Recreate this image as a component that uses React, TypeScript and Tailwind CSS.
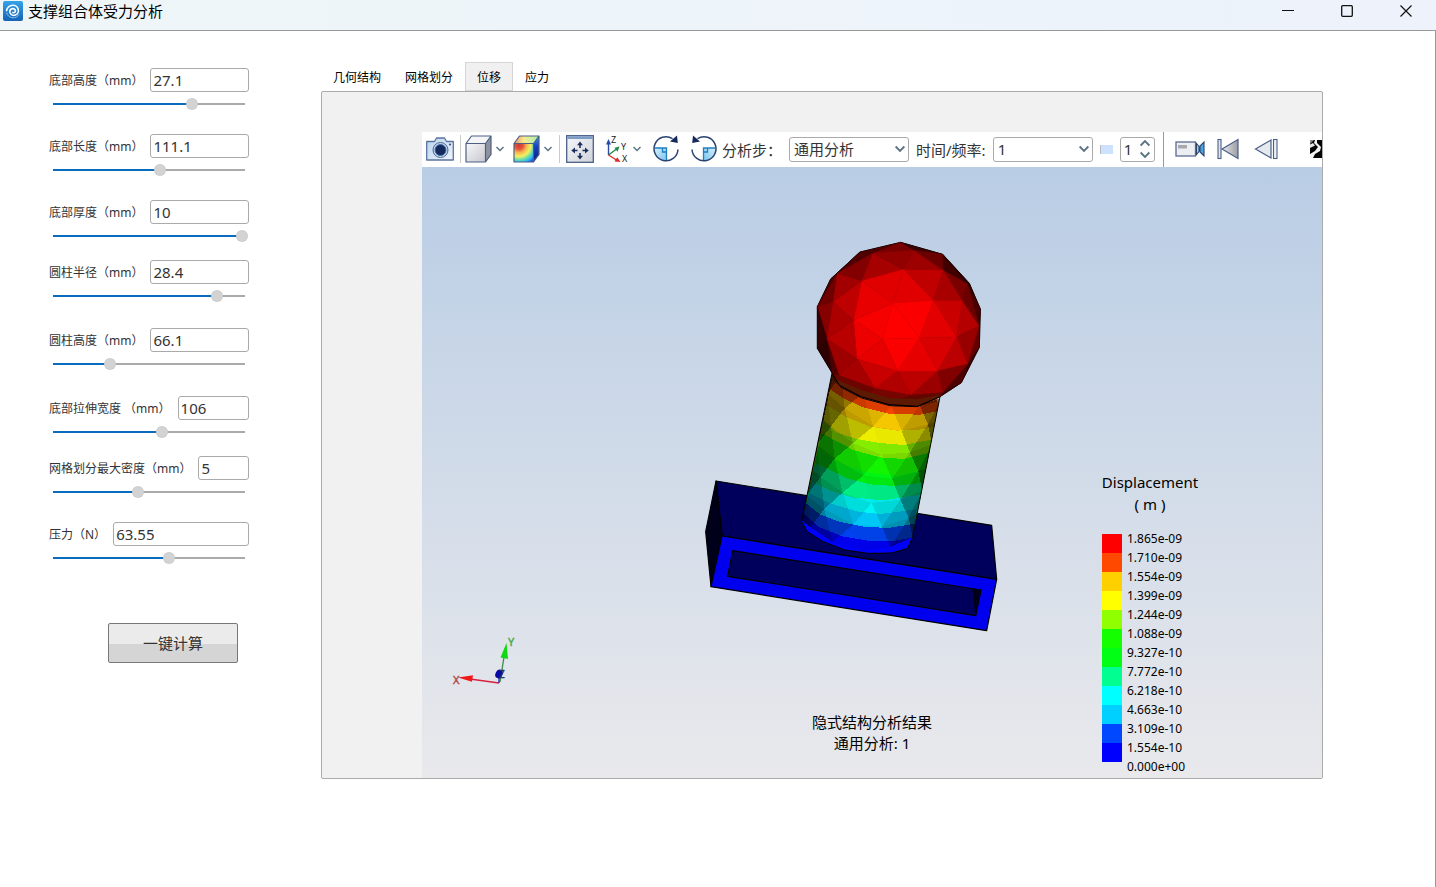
import { useState, type ReactNode } from "react";

type Param = { id: string; label: string; value: number; min: number; max: number; gap: string };

const PARAMS: Param[] = [
  { id: "base-height", label: "底部高度（mm）", value: 27.1, min: 0, max: 37.2, gap: "" },
  { id: "base-length", label: "底部长度（mm）", value: 111.1, min: 0, max: 200, gap: "mt-[22px]" },
  { id: "base-thickness", label: "底部厚度（mm）", value: 10, min: 0, max: 10, gap: "mt-[22px]" },
  { id: "cylinder-radius", label: "圆柱半径（mm）", value: 28.4, min: 0, max: 32.9, gap: "mt-4" },
  { id: "cylinder-height", label: "圆柱高度（mm）", value: 66.1, min: 40, max: 132, gap: "mt-6" },
  { id: "extrude-width", label: "底部拉伸宽度 （mm）", value: 106, min: 0, max: 187.6, gap: "mt-6" },
  { id: "mesh-density", label: "网格划分最大密度（mm）", value: 5, min: 0, max: 11.5, gap: "mt-4" },
  { id: "pressure", label: "压力（N）", value: 63.55, min: 0, max: 105.4, gap: "mt-[22px]" },
];

const TABS = ["几何结构", "网格划分", "位移", "应力"];

function ParamRow({ param }: { param: Param }) {
  const [text, setText] = useState(String(param.value));
  const n = Math.min(param.max, Math.max(param.min, Number(text) || 0));
  const p = (n - param.min) / (param.max - param.min);
  const stop = 5 + 184 * p;
  return (
    <div className={param.gap}>
      <div className="flex h-6 items-center gap-[7px]">
        <label htmlFor={param.id} className="shrink-0 pt-px text-xs whitespace-pre text-[#333]">
          {param.label}
        </label>
        <input
          id={param.id}
          type="text"
          value={text}
          onChange={(e) => setText(e.target.value)}
          className="h-6 min-w-0 flex-1 rounded-[3px] border border-[#aaa] bg-white px-[2px] text-[15px] leading-5 text-[#333] outline-none"
        />
      </div>
      <input
        type="range"
        aria-label={param.label}
        min={param.min}
        max={param.max}
        step="any"
        value={n}
        onChange={(e) => setText(String(Math.round(Number(e.target.value) * 100) / 100))}
        style={{
          backgroundImage: `linear-gradient(to right, #0a6cbf ${stop}px, #aaa ${stop}px, #aaa 192px, transparent 192px)`,
        }}
        className="mt-1 ml-1 block h-4 w-[194px] appearance-none bg-[length:100%_2px] bg-center bg-no-repeat outline-none [&::-webkit-slider-thumb]:h-[10px] [&::-webkit-slider-thumb]:w-[10px] [&::-webkit-slider-thumb]:appearance-none [&::-webkit-slider-thumb]:rounded-full [&::-webkit-slider-thumb]:bg-[#d3d3d3] [&::-webkit-slider-thumb]:shadow-[0_0_0_1px_#ccc]"
      />
    </div>
  );
}

function AppIcon() {
  return (
    <svg viewBox="0 0 20 20" className="h-5 w-5" aria-hidden="true">
      <defs>
        <linearGradient id="app-bg" x1="0" y1="0" x2="0" y2="1">
          <stop offset="0" stopColor="#35a3ea" />
          <stop offset="1" stopColor="#1762b4" />
        </linearGradient>
      </defs>
      <rect width="20" height="20" rx="2" fill="url(#app-bg)" />
      <path
        d="M9.800 11.600c1.300.6 2.700-.4 2.600-1.800-.1-1.600-1.800-2.500-3.400-2-1.700.6-2.500 2.500-1.900 4.200.8 2 3.100 2.900 5.200 2.100 2.400-.9 3.600-3.500 2.900-5.900-.8-2.800-3.700-4.400-6.700-3.700-2.500.6-4.400 2.600-4.900 5"
        fill="none"
        stroke="#fff"
        strokeWidth="1.600"
        strokeLinecap="round"
      />
      <path d="M3.600 11.500c.6 3 3.300 5.300 6.500 5.300 2.500 0 4.700-1.300 5.900-3.300" fill="none" stroke="#8cc6f0" strokeWidth=".9" />
    </svg>
  );
}

function Chevron({ className = "h-[6px] w-2" }: { className?: string }) {
  return (
    <svg viewBox="0 0 8 6" className={className} aria-hidden="true">
      <path d="M.5 1 4 4.500 7.500 1" fill="none" stroke="#5a7380" strokeWidth="1.500" />
    </svg>
  );
}

function ToolButton({ label, className, children }: { label: string; className: string; children: ReactNode }) {
  return (
    <button type="button" aria-label={label} className={`flex h-7 shrink-0 items-center justify-center ${className}`}>
      {children}
    </button>
  );
}

function Divider({ className }: { className: string }) {
  return <div className={`w-px shrink-0 ${className}`} />;
}

function CameraIcon() {
  return (
    <svg viewBox="0 0 28 28" className="h-7 w-7">
      <defs>
        <linearGradient id="cam" x1="0" y1="0" x2="1" y2="1">
          <stop offset="0" stopColor="#b9d3ee" />
          <stop offset="1" stopColor="#eef4fb" />
        </linearGradient>
      </defs>
      <path d="M.7 6.500h7.800L10.500 3h8l2 3.500h6.800V25H.7z" fill="url(#cam)" stroke="#5b749e" strokeWidth="1.300" strokeLinejoin="round" />
      <circle cx="14.500" cy="15" r="7.500" fill="#c3d8ee" stroke="#4c658f" strokeWidth="1" />
      <circle cx="14.500" cy="15" r="5.500" fill="#16295c" stroke="#3e6ca8" strokeWidth="1" />
      <circle cx="24" cy="9.500" r="1" fill="#24427a" />
    </svg>
  );
}

function CubeIcon({ colored = false }: { colored?: boolean }) {
  return (
    <svg viewBox="0 0 28 28" className="h-7 w-7">
      <defs>
        <linearGradient id="cube-front" x1="0" y1="0" x2="1" y2="1">
          <stop offset="0" stopColor="#f7f8fa" />
          <stop offset="1" stopColor="#c5c8ce" />
        </linearGradient>
        <radialGradient id="cube-hot" gradientUnits="userSpaceOnUse" cx="6" cy="10" r="21">
          <stop offset="0" stopColor="#c93c34" />
          <stop offset=".2" stopColor="#e5543c" />
          <stop offset=".36" stopColor="#f6b64e" />
          <stop offset=".55" stopColor="#f3f060" />
          <stop offset=".72" stopColor="#5fdcb0" />
          <stop offset=".83" stopColor="#35b8f5" />
          <stop offset="1" stopColor="#1646e0" />
        </radialGradient>
        <linearGradient id="cube-top" x1="0" y1="0" x2="1" y2="0">
          <stop offset="0" stopColor="#f0906a" />
          <stop offset=".4" stopColor="#f5ec90" />
          <stop offset="1" stopColor="#a5efb4" />
        </linearGradient>
        <linearGradient id="cube-side" x1="0" y1="0" x2="0" y2="1">
          <stop offset="0" stopColor="#35a8e8" />
          <stop offset=".4" stopColor="#1740c8" />
          <stop offset="1" stopColor="#0a1a80" />
        </linearGradient>
      </defs>
      <path d="M1 8.500 6.500 1H26l-5.500 7.500z" fill={colored ? "url(#cube-top)" : "#f4f5f6"} />
      <path d="M20.500 8.500 26 1v18.500L20.500 27z" fill={colored ? "url(#cube-side)" : "#8e939c"} />
      <path d="M1 8.500h19.500V27H1z" fill={colored ? "url(#cube-hot)" : "url(#cube-front)"} />
      <path
        d="M1 8.500 6.500 1H26v18.500L20.500 27H1zM1 8.500h19.500V27M20.500 8.500 26 1"
        fill="none"
        stroke="#4d5f85"
        strokeWidth="1.200"
        strokeLinejoin="round"
      />
    </svg>
  );
}

function FitIcon() {
  return (
    <svg viewBox="0 0 28 28" className="h-7 w-7">
      <defs>
        <linearGradient id="fit" x1="0" y1="0" x2="1" y2="1">
          <stop offset="0" stopColor="#f6f7f9" />
          <stop offset="1" stopColor="#cfd3da" />
        </linearGradient>
      </defs>
      <rect x=".7" y=".7" width="26.600" height="26.600" fill="url(#fit)" stroke="#4a5f88" strokeWidth="1.300" />
      <rect x="1.300" y="1.300" width="25.400" height="2.700" fill="#7d9cc6" />
      <path
        d="m14 6.500 3 3.700h-2.200V13h-1.600v-2.800H11zM14 24.500l3-3.700h-2.200V18h-1.600v2.800H11zM5.300 15.500l3.700-3v2.200h2.500v1.600H9v2.200zM22.700 15.500l-3.700-3v2.200h-2.500v1.600H19v2.200z"
        fill="#1c2f5c"
      />
    </svg>
  );
}

function AxesIcon() {
  return (
    <svg viewBox="0 0 25 28" className="h-7 w-[25px] overflow-visible">
      <g fill="none" strokeWidth="1.400">
        <path d="M3.500 20V8" stroke="#2b4aa8" />
        <path d="m3.500 20 8-6" stroke="#1e8a4a" />
        <path d="m3.500 20 8 5" stroke="#e02a2a" />
      </g>
      <path d="M3.500 4 6 9.500H1z" fill="#2b4aa8" />
      <path d="m14.500 11.500-2 5.200-3-4z" fill="#1e8a4a" />
      <path d="m15.500 27-6-.4 2.700-4.300z" fill="#e02a2a" />
      <g fill="#222" fontFamily="Noto Sans" fontSize="9">
        <text x="6" y="8">Z</text>
        <text x="16" y="15">Y</text>
        <text x="17" y="27">X</text>
      </g>
    </svg>
  );
}

function RotateIcon({ flip = false }: { flip?: boolean }) {
  return (
    <svg viewBox="0 0 26 28" className="h-7 w-[26px]">
      <defs>
        <linearGradient id="pie" x1="0" y1="0" x2="1" y2="1">
          <stop offset="0" stopColor="#d5eefb" />
          <stop offset="1" stopColor="#7cc6f0" />
        </linearGradient>
      </defs>
      <g transform={flip ? "translate(26 0) scale(-1 1)" : undefined}>
        <path d="M13.500 13v12.500A12 12 0 0 1 1.200 13z" fill="url(#pie)" />
        <path d="M1.500 13h12v12.500M9.500 13v4h4" fill="none" stroke="#1f7fbf" strokeWidth="1.300" />
        <path d="M25 14.500A12 12 0 1 1 19.500 3.700" fill="none" stroke="#2a4270" strokeWidth="1.500" />
        <path d="M24 .5 24.800 8 17 6.500z" fill="#16295c" />
      </g>
    </svg>
  );
}

function MovieIcon() {
  return (
    <svg viewBox="0 0 30 20" className="h-5 w-[30px]">
      <rect x="1" y="3" width="19.500" height="14" fill="#eceef2" stroke="#5b6c90" strokeWidth="1.300" />
      <rect x="3" y="6" width="9" height="3.500" fill="#a7a9ad" />
      <path d="M29 3v14l-4-4v-6z" fill="#49a3dc" stroke="#2d4470" strokeWidth="1.100" />
      <path d="m21.500 4.500 2.500 3v5l-2.500 3z" fill="#a9d4f0" stroke="#2d4470" strokeWidth="1.100" />
      <path d="M24 7.500h1v5h-1z" fill="#2d4470" />
    </svg>
  );
}

function FirstIcon() {
  return (
    <svg viewBox="0 0 22 22" className="h-[22px] w-[22px]">
      <defs>
        <linearGradient id="first" x1="0" x2="1">
          <stop offset="0" stopColor="#e8eaee" />
          <stop offset="1" stopColor="#9a9da3" />
        </linearGradient>
      </defs>
      <rect x="1" y="1.500" width="3" height="19" fill="#dfe5ee" stroke="#4a5f88" strokeWidth="1.100" />
      <path d="M21 1.500v19L5 11z" fill="url(#first)" stroke="#4a5f88" strokeWidth="1.200" />
    </svg>
  );
}

function PrevIcon() {
  return (
    <svg viewBox="0 0 24 22" className="h-[22px] w-6">
      <path d="M17 2v18L1.500 11z" fill="#e6e9ee" stroke="#4a5f88" strokeWidth="1.200" />
      <rect x="19.500" y="1.500" width="3.500" height="19" fill="#eef1f5" stroke="#4a5f88" strokeWidth="1.100" />
    </svg>
  );
}

function BusyIcon() {
  return (
    <svg viewBox="0 0 18 18" className="h-[18px] w-[18px]">
      <rect width="18" height="18" fill="#050505" />
      <path d="M0 0h4L0 4z" fill="#888" />
      <path d="M5 0 4 3l4 4-3 4-5 3v4h3l2-4 5-3 1-4-4-4V0z" fill="#f4f4f4" />
      <path d="M0 4.500 3 3l2 2.500L0 8z" fill="#e6e6e6" />
    </svg>
  );
}

function ComboBox({ label, value, className }: { label: string; value: string; className: string }) {
  return (
    <div className={`relative ml-[7px] shrink-0 ${className}`}>
      <select
        aria-label={label}
        className="block h-[25px] w-full appearance-none rounded-[3px] border border-[#aaa] bg-white pr-5 pl-1 text-[15px] leading-5 text-[#333] outline-none"
      >
        <option>{value}</option>
      </select>
      <Chevron className="pointer-events-none absolute top-[8px] right-[4px] h-[8px] w-[10px]" />
    </div>
  );
}

function Toolbar() {
  return (
    <div className="flex h-[35px] items-center overflow-hidden bg-white pb-px pl-1 text-[15px] text-[#333]">
      <ToolButton label="截图" className="w-7">
        <CameraIcon />
      </ToolButton>
      <Divider className="ml-[6px] h-7 bg-[#ccc]" />
      <ToolButton label="显示样式" className="ml-1 gap-[3px]">
        <CubeIcon />
        <Chevron />
      </ToolButton>
      <ToolButton label="云图样式" className="ml-[9px] gap-[3px]">
        <CubeIcon colored />
        <Chevron />
      </ToolButton>
      <Divider className="ml-[7px] h-7 bg-[#ccc]" />
      <ToolButton label="适应窗口" className="ml-[6px] w-7">
        <FitIcon />
      </ToolButton>
      <ToolButton label="视图方向" className="ml-[11px] gap-[3px]">
        <AxesIcon />
        <Chevron />
      </ToolButton>
      <ToolButton label="顺时针旋转" className="ml-3 w-[26px]">
        <RotateIcon />
      </ToolButton>
      <ToolButton label="逆时针旋转" className="ml-3 w-[26px]">
        <RotateIcon flip />
      </ToolButton>
      <span className="ml-[5px] shrink-0 pt-[2px]">分析步：</span>
      <ComboBox label="分析步" value="通用分析" className="w-[120px]" />
      <span className="ml-[7px] shrink-0 pt-[2px]">时间/频率:</span>
      <ComboBox label="时间/频率" value="1" className="w-[100px]" />
      <div className="ml-[7px] h-[9px] w-[13px] shrink-0 border-l border-[#bbb] bg-[#cce2ff]" />
      <div className="ml-[7px] flex h-[25px] w-[35px] shrink-0 rounded-[3px] border border-[#aaa]">
        <input aria-label="帧" type="text" defaultValue="1" className="w-4 min-w-0 flex-1 pl-[3px] text-[15px] text-[#333] outline-none" />
        <div className="flex w-[18px] flex-col justify-center gap-1">
          <button type="button" aria-label="增加" className="flex justify-center">
            <Chevron className="h-[8px] w-[10px] rotate-180" />
          </button>
          <button type="button" aria-label="减少" className="flex justify-center">
            <Chevron className="h-[8px] w-[10px]" />
          </button>
        </div>
      </div>
      <Divider className="ml-2 h-[35px] bg-[#999]" />
      <ToolButton label="动画" className="ml-[11px] w-[30px]">
        <MovieIcon />
      </ToolButton>
      <ToolButton label="第一帧" className="ml-3 w-[22px]">
        <FirstIcon />
      </ToolButton>
      <ToolButton label="上一帧" className="ml-[15px] w-6">
        <PrevIcon />
      </ToolButton>
      <ToolButton label="播放" className="ml-8 w-[18px]">
        <BusyIcon />
      </ToolButton>
    </div>
  );
}

/* ---- Result model: ball, column and hollow base ---- */

const V: Record<string, [number, number]> = {
  S1: [302, 37], S2: [428, 73], S3: [508, 160], S4: [541, 237], S5: [538, 352], S6: [484, 458],
  S7: [420, 500], S8: [352, 529], S9: [268, 524], S10: [183, 500], S11: [118, 466], S12: [97, 430],
  S13: [52, 355], S14: [52, 230], S15: [92, 147], S16: [180, 66],
  a: [340, 60], b: [219, 69], c: [112, 130], d: [99, 215], e: [81, 326], f: [118, 436], g: [225, 475],
  h: [333, 495], i: [429, 487], j: [503, 402], k: [537, 288], l: [487, 212], m: [503, 163], n: [430, 121],
  o: [310, 118], p: [185, 152], q: [161, 270], r: [171, 386], s: [293, 423], t: [413, 423], u: [470, 321],
  v: [400, 211], w: [278, 220], x: [248, 327], y: [358, 324],
};

const BALL_OUTLINE = "S1 S2 S3 S4 S5 S6 S7 S8 S9 S10 S11 S12 S13 S14 S15 S16";

const BALL_FACETS: [string, string][] = [
  ["S16 S1 b", "#480000"], ["S1 a b", "#760000"], ["S1 S2 a", "#380000"], ["S2 n a", "#6a0000"],
  ["S2 m n", "#400000"], ["S2 S3 m", "#2e0000"], ["S3 S4 m", "#2a0000"], ["m S4 k", "#4a0000"],
  ["S4 k S5", "#2c0000"], ["k j S5", "#600000"], ["j S5 S6", "#380000"], ["j S6 i", "#4e0000"],
  ["i S6 S7", "#3a0000"], ["S16 b c", "#500000"], ["S15 S16 c", "#2a0000"], ["S15 c S14", "#480000"],
  ["c d S14", "#6e0000"], ["S14 d e", "#860000"], ["S14 e S13", "#360000"], ["S13 e S12", "#2c0000"],
  ["e f S12", "#4c0000"], ["f g S10 S11 S12", "#6c0400"], ["g h S9 S10", "#760400"], ["h i S7 S8 S9", "#640600"],
  ["n m l", "#7a0000"], ["m k l", "#6c0000"], ["l k u", "#b40000"], ["k j u", "#980000"],
  ["u j t", "#ba0000"], ["t j i", "#800000"], ["t i h", "#9a0000"], ["s t h", "#bc0000"],
  ["g s h", "#b00000"], ["r s g", "#c80000"], ["f r g", "#a60000"], ["e r f", "#9e0000"],
  ["e q r", "#b80000"], ["d q e", "#aa0000"], ["d p q", "#be0000"], ["c p d", "#a20000"],
  ["c b p", "#820000"], ["b o p", "#a60000"], ["b a o", "#920000"], ["a n o", "#9c0000"],
  ["o n v", "#c00000"], ["n l v", "#a80000"], ["v l u", "#c80000"], ["y v u", "#e20000"],
  ["y u t", "#d80000"], ["y t s", "#e60000"], ["x y s", "#fb0000"], ["r x s", "#e60000"],
  ["q x r", "#ec0000"], ["q w x", "#f60000"], ["p w q", "#e80000"], ["p o w", "#e00000"],
  ["o v w", "#e00000"], ["w v y", "#fa0000"], ["w y x", "#ff0000"],
];

const pts = (names: string) => names.split(" ").map((key) => V[key].join(",")).join(" ");

// Each band is drawn from its upper edge down to the foot of the column.
const COLUMN_FOOT = "398,500 383,535 335,549 265,550 195,540 130,515 82,485 65,455";
const BANDS: [string, string][] = [
  ["157,0 480,40", "#b83400"],
  ["157,30 183,52 245,84 330,107 410,110 480,93", "#ff4800"],
  ["150,58 190,85 250,112 330,132 420,134 480,122", "#ffd000"],
  ["140,105 200,142 270,170 350,182 430,178 470,168", "#ffff00"],
  ["130,148 165,185 230,207 300,219 370,225 460,208", "#90ff00"],
  ["125,190 220,240 300,262 370,267 450,248", "#14ff00"],
  ["115,240 190,285 270,308 350,318 440,298", "#00ff14"],
  ["106,280 145,298 200,325 270,343 340,348 435,338", "#00ff90"],
  ["96,335 150,362 220,383 310,391 420,374", "#00ffff"],
  ["88,370 150,400 235,425 300,432 410,418", "#00d0ff"],
  ["76,398 120,433 180,456 250,470 325,474 405,461", "#0048ff"],
  ["70,430 115,470 190,500 270,513 340,513 396,503", "#0000ff"],
];
const COLUMN_SHAPE = `157,5 183,52 245,84 330,107 410,110 480,80 ${COLUMN_FOOT}`;

const ROW_EVEN = [0, 0.08, 0.28, 0.54, 0.8, 1];
const ROW_ODD = [0, 0.16, 0.42, 0.68, 0.92, 1];

function columnPoint(u: number, s: number): [number, number] {
  return [
    Math.round(157 - 92 * s + (328 + 5 * s) * u),
    Math.round(-6 + 458 * s + (90 - 40 * s) * u + 66 * Math.sin(Math.PI * u)),
  ];
}

function columnFacets() {
  const facets: { points: string; shade: number }[] = [];
  const rows = 6;
  for (let r = 0; r < rows; r++) {
    const top = r % 2 ? ROW_ODD : ROW_EVEN;
    const bottom = r % 2 ? ROW_EVEN : ROW_ODD;
    const s0 = r / rows;
    const s1 = (r + 1) / rows;
    const add = (list: [number, number][], tilt: number) => {
      const u = list.reduce((sum, item) => sum + item[0], 0) / 3;
      const light = 0.26 + 0.68 * Math.pow(Math.sin(Math.PI * Math.min(1, Math.pow(u, 1.1))), 0.85) + tilt;
      facets.push({
        points: list.map(([a, s]) => columnPoint(a, s).join(",")).join(" "),
        shade: Math.max(0.04, Math.min(0.72, 1 - light)),
      });
    };
    for (let c = 0; c < 5; c++) {
      if (r % 2 === 0) {
        add([[top[c], s0], [top[c + 1], s0], [bottom[c], s1]], -0.03);
        add([[top[c + 1], s0], [bottom[c], s1], [bottom[c + 1], s1]], 0.03);
      } else {
        add([[top[c], s0], [bottom[c], s1], [bottom[c + 1], s1]], 0.03);
        add([[top[c], s0], [top[c + 1], s0], [bottom[c + 1], s1]], -0.03);
      }
    }
  }
  return facets;
}

const COLUMN_FACETS = columnFacets();

function Model() {
  return (
    <svg viewBox="422 167 900 611" className="absolute inset-0 h-full w-full" role="img" aria-label="位移云图">
      <defs>
        <clipPath id="column-clip">
          <polygon points={COLUMN_SHAPE} />
        </clipPath>
      </defs>

      <g transform="translate(690 460) scale(0.33333)" stroke="#000" strokeWidth="3.500" strokeLinejoin="round">
        <polygon points="78,63 905,196 920,358 96,228" fill="#00005c" />
        <polygon points="78,63 96,228 63,380 47,215" fill="#00001a" />
        <polygon points="96,228 920,358 890,512 63,380" fill="#0000ee" />
        <polygon points="128,272 873,390 857,467 113,349" fill="#00005c" />
        <polygon points="848,387 873,390 857,467" fill="#000018" strokeWidth="1" />
      </g>

      <g transform="translate(780 370) scale(0.33333)">
        <g clipPath="url(#column-clip)" shapeRendering="crispEdges">
          {BANDS.map(([edge, fill]) => (
            <polygon key={edge} points={`${edge} ${COLUMN_FOOT}`} fill={fill} />
          ))}
          {COLUMN_FACETS.map((facet) => (
            <polygon key={facet.points} points={facet.points} fill="#000" fillOpacity={facet.shade} />
          ))}
        </g>
        <polygon points={COLUMN_SHAPE} fill="none" stroke="#000" strokeWidth="3" />
      </g>

      <g transform="translate(800 230) scale(0.33333)">
        <polygon points={pts(BALL_OUTLINE)} fill="#3a0000" stroke="#000" strokeWidth="3" />
        {BALL_FACETS.map(([names, fill]) => (
          <polygon key={names} points={pts(names)} fill={fill} stroke={fill} strokeWidth="0.800" />
        ))}
        <polygon points="108,448 183,480 268,504 352,508 425,494 418,502 352,527 268,522 183,498 118,464" fill="#5c1a00" />
        <polyline points="97,430 118,466 183,500 268,524 352,529 420,500" fill="none" stroke="#000" strokeWidth="3" />
      </g>

      <g strokeWidth="1.300">
        <path d="M499 683 470 679" stroke="#d8203a" />
        <path d="m458 677.500 15-2.200-1 6.500z" fill="#f01818" />
        <path d="m500 682 4-25" stroke="#3a8a4a" />
        <path d="m506.500 643 1.500 16-7.500-1.500z" fill="#12d812" />
        <path d="M499 683v-6" stroke="#2020c0" />
        <ellipse cx="499" cy="674" rx="3.500" ry="4.500" fill="#0808a8" transform="rotate(25 499 674)" />
        <g fontFamily="Noto Sans" fontSize="11" strokeWidth="0.400">
          <text x="453" y="684" fill="#b04848" stroke="#b04848">X</text>
          <text x="508" y="646" fill="#48a848" stroke="#48a848">Y</text>
          <text x="499" y="678" fill="#203060" stroke="#203060" fontSize="10">Z</text>
        </g>
      </g>
    </svg>
  );
}

const SWATCHES = [
  "bg-[#ff0000]", "bg-[#ff4800]", "bg-[#ffd000]", "bg-[#ffff00]", "bg-[#90ff00]", "bg-[#14ff00]",
  "bg-[#00ff14]", "bg-[#00ff90]", "bg-[#00ffff]", "bg-[#00d0ff]", "bg-[#0048ff]", "bg-[#0000ff]",
];
const LEVELS = [
  "1.865e-09", "1.710e-09", "1.554e-09", "1.399e-09", "1.244e-09", "1.088e-09", "9.327e-10",
  "7.772e-10", "6.218e-10", "4.663e-10", "3.109e-10", "1.554e-10", "0.000e+00",
];

function Legend() {
  return (
    <div className="absolute right-[122px] bottom-[2px] w-[100px] text-black">
      <div className="text-center text-[15px] leading-[22px]">
        <div>Displacement</div>
        <div>( m )</div>
      </div>
      <div className="mt-[14px] flex gap-[5px] pl-[2px]">
        <div className="mt-[5px] w-5">
          {SWATCHES.map((color) => (
            <div key={color} className={`h-[19px] ${color}`} />
          ))}
        </div>
        <div className="text-xs leading-[19px]">
          {LEVELS.map((level) => (
            <div key={level}>{level}</div>
          ))}
        </div>
      </div>
    </div>
  );
}

export default function App() {
  const [tab, setTab] = useState(2);
  return (
    <div className="flex min-h-screen flex-col bg-white font-['Noto_Sans','Noto_Sans_CJK_SC',sans-serif]">
      <header className="flex h-[31px] items-start justify-between border-b border-[#999] bg-gradient-to-r from-[#eef6f8] to-[#edf2fb] pl-[3px]">
        <div className="flex items-center gap-[5px] pt-px">
          <AppIcon />
          <h1 className="text-[15px] leading-5 text-black">支撑组合体受力分析</h1>
        </div>
        <div className="flex h-[22px] items-center gap-[47px] pr-6">
          <button type="button" aria-label="最小化" className="h-3 w-3">
            <svg viewBox="0 0 12 12" className="h-3 w-3"><path d="M0 5.500h12" stroke="#111" /></svg>
          </button>
          <button type="button" aria-label="最大化" className="h-3 w-3">
            <svg viewBox="0 0 12 12" className="h-3 w-3"><rect x=".7" y=".7" width="10.600" height="10.600" rx="1" fill="none" stroke="#111" strokeWidth="1.300" /></svg>
          </button>
          <button type="button" aria-label="关闭" className="h-3 w-3">
            <svg viewBox="0 0 12 12" className="h-3 w-3"><path d="m.5.5 11 11m0-11-11 11" stroke="#111" strokeWidth="1.200" /></svg>
          </button>
        </div>
      </header>

      <main className="flex flex-1 border-r border-[#999] pt-[31px] pr-28 pb-[108px] pl-[49px]">
        <form className="w-[200px] shrink-0 pt-[6px]" onSubmit={(e) => e.preventDefault()}>
          {PARAMS.map((param) => (
            <ParamRow key={param.id} param={param} />
          ))}
          <button
            type="submit"
            className="mt-[57px] ml-[59px] h-10 w-[130px] rounded-[2px] border border-[#777] bg-[linear-gradient(#ebebeb_52%,#d5d5d5_52%)] text-[15px] text-[#333]"
          >
            一键计算
          </button>
        </form>

        <section className="ml-[72px] flex min-w-0 flex-1 flex-col">
          <div role="tablist" className="flex h-[29px]">
            {TABS.map((name, index) => (
              <button
                key={name}
                type="button"
                role="tab"
                aria-selected={index === tab}
                onClick={() => setTab(index)}
                className={`border px-[11px] pt-[2px] text-xs text-black ${index === tab ? "border-[#d5d5d5] bg-[#f0f0f0]" : "border-transparent"}`}
              >
                {name}
              </button>
            ))}
          </div>
          <div className="flex flex-1 flex-col rounded-[2px] border border-[#aaa] bg-[#f1f1f1] pt-10 pl-[100px]">
            <Toolbar />
            <div className="relative min-h-[360px] flex-1 overflow-hidden bg-gradient-to-b from-[#b9cde5] to-[#e9e9ec]">
              <Model />
              <Legend />
              <div className="absolute inset-x-0 bottom-6 text-center text-[15px] leading-[21px] text-black">
                <div>隐式结构分析结果</div>
                <div>通用分析: 1</div>
              </div>
            </div>
          </div>
        </section>
      </main>
    </div>
  );
}
